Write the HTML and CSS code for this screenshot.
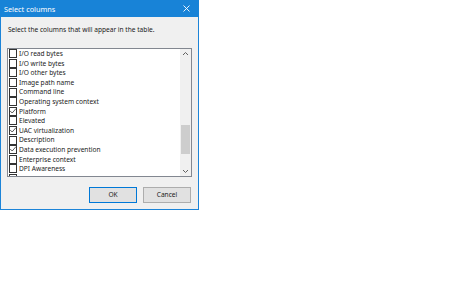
FILE: index.html
```html
<!DOCTYPE html>
<html>
<head>
<meta charset="utf-8">
<link rel="stylesheet" href="styles.css">
</head>
<body>
<div class="dialog">
  <div class="titlebar">
    <span class="title">Select columns</span>
    <svg class="close" width="7" height="7" viewBox="0 0 7 7"><path d="M0.5 0.5 L6.5 6.5 M6.5 0.5 L0.5 6.5" stroke="#ffffff" stroke-width="0.9" fill="none"/></svg>
  </div>
  <div class="content">
    <div class="prompt">Select the columns that will appear in the table.</div>
    <div class="listbox">
      <div class="items">
        <div class="item"><span class="box"></span>I/O read bytes</div>
        <div class="item"><span class="box"></span>I/O write bytes</div>
        <div class="item"><span class="box"></span>I/O other bytes</div>
        <div class="item"><span class="box"></span>Image path name</div>
        <div class="item"><span class="box"></span>Command line</div>
        <div class="item"><span class="box"></span>Operating system context</div>
        <div class="item"><span class="box checked"><svg viewBox="0 0 8 8" width="8" height="8"><path d="M1.2 4 L3.2 6 L7 1.6" stroke="#333" stroke-width="0.8" fill="none"/></svg></span>Platform</div>
        <div class="item"><span class="box"></span>Elevated</div>
        <div class="item"><span class="box checked"><svg viewBox="0 0 8 8" width="8" height="8"><path d="M1.2 4 L3.2 6 L7 1.6" stroke="#333" stroke-width="0.8" fill="none"/></svg></span>UAC virtualization</div>
        <div class="item"><span class="box"></span>Description</div>
        <div class="item"><span class="box checked"><svg viewBox="0 0 8 8" width="8" height="8"><path d="M1.2 4 L3.2 6 L7 1.6" stroke="#333" stroke-width="0.8" fill="none"/></svg></span>Data execution prevention</div>
        <div class="item"><span class="box"></span>Enterprise context</div>
        <div class="item"><span class="box"></span>DPI Awareness</div>
        <div class="item partial"><span class="box"></span></div>
      </div>
      <div class="scrollbar">
        <svg class="arrow" width="11" height="10" viewBox="0 0 11 10"><path d="M3 6 L5.5 3.5 L8 6" stroke="#606060" stroke-width="1" fill="none"/></svg>
        <div class="track"><div class="thumb"></div></div>
        <svg class="arrow" width="11" height="10" viewBox="0 0 11 10"><path d="M3 4 L5.5 6.5 L8 4" stroke="#606060" stroke-width="1" fill="none"/></svg>
      </div>
    </div>
    <div class="buttons">
      <div class="btn default">OK</div>
      <div class="btn">Cancel</div>
    </div>
  </div>
</div>
</body>
</html>
```
FILE: styles.css
```css
html, body {
  margin: 0;
  padding: 0;
  background: #ffffff;
}
body {
  font-family: "Noto Sans", "Open Sans", sans-serif;
  font-size: 6.6px;
  color: #1a1a1a;
}
.dialog {
  width: 197px;
  height: 209px;
  border: 1px solid #1c84d8;
  border-top: none;
  background: #f0f0f0;
  display: flex;
  flex-direction: column;
}
.titlebar {
  height: 17px;
  background: #1883d7;
  display: flex;
  align-items: center;
  justify-content: space-between;
  padding: 0 9px 0 4px;
  color: #fff;
  margin: 0 -1px;
}
.title {
  font-size: 7.3px;
}
.close {
  display: block;
}
.content {
  padding: 0 6px 0 6px;
  display: flex;
  flex-direction: column;
}
.prompt {
  height: 31px;
  line-height: 26px;
  padding-left: 1px;
}
.listbox {
  height: 127px;
  border: 1px solid #828790;
  background: #fff;
  display: flex;
  overflow: hidden;
}
.items {
  flex: 1;
  overflow: hidden;
}
.item {
  height: 9.6px;
  line-height: 9.6px;
  display: flex;
  align-items: center;
  white-space: nowrap;
}
.box {
  width: 6px;
  height: 7px;
  border: 1px solid #333;
  background: #fff;
  margin: 0 2px 0 1px;
  flex: none;
  position: relative;
}
.box svg {
  position: absolute;
  left: -1px;
  top: -1px;
}
.scrollbar {
  width: 11px;
  background: #f0f0f0;
  display: flex;
  flex-direction: column;
}
.arrow {
  display: block;
  flex: none;
}
.track {
  flex: 1;
  padding-top: 66px;
}
.thumb {
  height: 29px;
  margin: 0 1px;
  background: #cdcdcd;
}
.buttons {
  display: flex;
  justify-content: flex-end;
  gap: 6px;
  padding-top: 10px;
  padding-right: 1px;
}
.btn {
  width: 46px;
  height: 14px;
  border: 1px solid #adadad;
  background: #e1e1e1;
  text-align: center;
  line-height: 14px;
}
.btn.default {
  border-color: #0078d7;
}
```
